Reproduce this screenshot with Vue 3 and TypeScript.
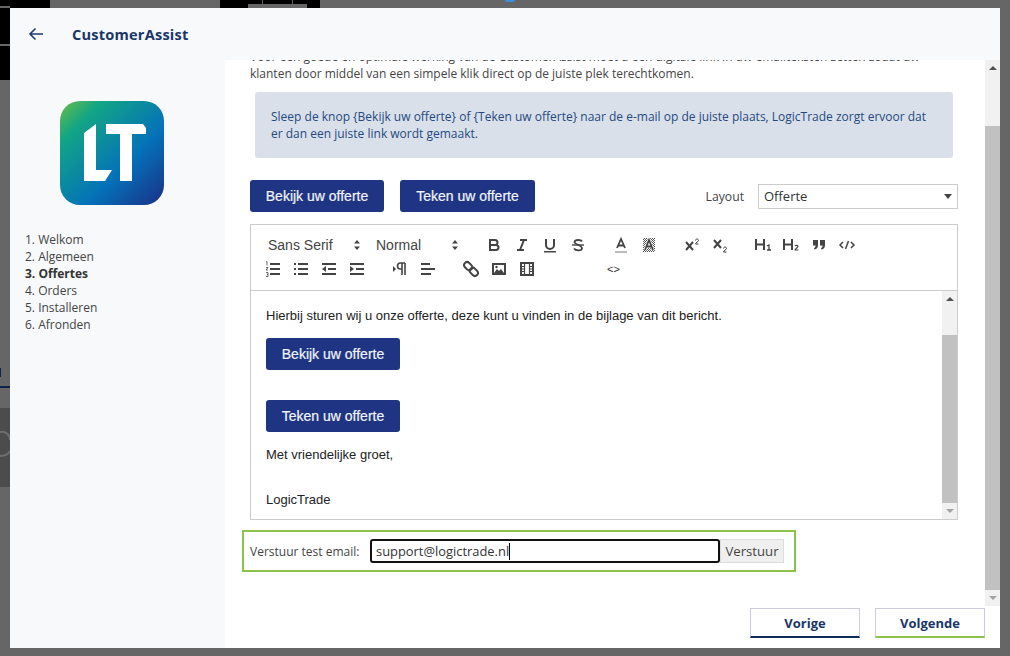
<script setup lang="ts">
const steps = ["1. Welkom", "2. Algemeen", "3. Offertes", "4. Orders", "5. Installeren", "6. Afronden"];
const activeStep = 2;
</script>

<template>
  <div class="page">
    <div class="backdrop-bits">
      <div class="bit bit-corner"></div>
      <div class="bit bit-side"><i></i></div>
      <div class="bit bit-top"><i></i></div>
      <div class="bit bit-tick"></div>
      <div class="bit bit-letter"></div>
      <div class="bit bit-line"></div>
      <div class="bit bit-avatar">
        <svg width="10" height="79" viewBox="0 0 10 79">
          <path d="M0 24c6-1 10 3 10 8M0 48c5 0 8-2 10-5" fill="none" stroke="#6e6e6e" stroke-width="2" />
        </svg>
      </div>
      <div class="bit bit-dot"></div>
    </div>

    <div class="modal">
      <aside class="sidebar">
        <div class="logo">
          <svg width="104" height="104" viewBox="0 0 104 104">
            <defs>
              <linearGradient id="lt" x1="0" y1="0" x2="1" y2="1">
                <stop offset="0" stop-color="#6cbd45" />
                <stop offset="0.2" stop-color="#12a585" />
                <stop offset="0.62" stop-color="#0472b9" />
                <stop offset="1" stop-color="#1b2f87" />
              </linearGradient>
            </defs>
            <rect width="104" height="104" rx="20" fill="url(#lt)" />
            <path d="M24 32L36 23V69H52L45 80H24Z" fill="#fff" />
            <path d="M46 23H83L86 27V33H72V80H60V33H46Z" fill="#fff" />
          </svg>
        </div>
        <ol class="steps">
          <li v-for="(step, i) in steps" :key="step" :class="{ active: i === activeStep }">{{ step }}</li>
        </ol>
      </aside>

      <div class="main">
        <header class="topbar">
          <svg class="back" width="16" height="14" viewBox="0 0 16 14">
            <path d="M15 7H2M7.5 1.500L2 7l5.500 5.500" fill="none" stroke="#1e3a73" stroke-width="1.600" />
          </svg>
          <span class="title">CustomerAssist</span>
        </header>

        <div class="body">
          <div class="content">
            <p class="intro">
              <span class="intro-first">Voor een goede en optimale werking van de CustomerAssist moet u een digitale link in uw emailteksten zetten zodat uw</span>
              klanten door middel van een simpele klik direct op de juiste plek terechtkomen.
            </p>

            <div class="notice">
              Sleep de knop {Bekijk uw offerte} of {Teken uw offerte} naar de e-mail op de juiste plaats, LogicTrade zorgt ervoor dat er dan een juiste link wordt gemaakt.
            </div>

            <div class="actions">
              <a class="offer-btn">Bekijk uw offerte</a>
              <a class="offer-btn">Teken uw offerte</a>
              <label class="layout-label">Layout</label>
              <div class="layout-select">
                <span>Offerte</span>
                <i class="caret"></i>
              </div>
            </div>

            <div class="editor">
              <div class="toolbar">
                <div class="tool-row">
                  <span class="picker picker-font">Sans Serif<svg width="8" height="12" viewBox="0 0 8 12"><path d="M4 1l3 3.500H1zM4 11L1 7.500h6z" fill="#444" /></svg></span>
                  <span class="picker picker-size">Normal<svg width="8" height="12" viewBox="0 0 8 12"><path d="M4 1l3 3.500H1zM4 11L1 7.500h6z" fill="#444" /></svg></span>
                  <svg class="ico" viewBox="0 0 18 18"><path d="M5 4h5a2.500 2.500 0 0 1 0 5H5zM5 9h6a2.500 2.500 0 0 1 0 5H5z" fill="none" stroke="#444" stroke-width="2" /></svg>
                  <svg class="ico" viewBox="0 0 18 18"><path d="M7 4h7M4 14h7M11 4L7 14" fill="none" stroke="#444" stroke-width="2" /></svg>
                  <svg class="ico" viewBox="0 0 18 18"><path d="M5 3v6a4 4 0 0 0 8 0V3" fill="none" stroke="#444" stroke-width="2" /><rect x="3" y="15" width="12" height="1.500" fill="#444" /></svg>
                  <svg class="ico" viewBox="0 0 18 18"><path d="M13 5.500C12 3.500 6 3.300 5.500 6c-.4 2.500 7.500 3 7.500 6.200C13 15 6.500 15 5 12.500" fill="none" stroke="#444" stroke-width="1.800" /><rect x="3" y="8.300" width="12" height="1.400" fill="#444" /></svg>
                  <svg class="ico gap" viewBox="0 0 18 18"><path d="M5 12L9 3l4 9M6.500 9.500h5" fill="none" stroke="#444" stroke-width="1.800" /><rect x="3" y="15" width="12" height="2" fill="#bbb" /></svg>
                  <svg class="ico" viewBox="0 0 18 18"><defs><pattern id="hatch" width="2" height="2" patternUnits="userSpaceOnUse"><rect width="1" height="1" fill="#555" /><rect x="1" y="1" width="1" height="1" fill="#555" /></pattern></defs><rect x="3" y="2" width="12" height="14" fill="url(#hatch)" /><path d="M5 14L9 4l4 10M6.500 10.500h5" fill="none" stroke="#fff" stroke-width="3" /><path d="M5 14L9 4l4 10M6.500 10.500h5" fill="none" stroke="#444" stroke-width="1.800" /></svg>
                  <svg class="ico gap" viewBox="0 0 18 18"><path d="M3 6l7 8M10 6l-7 8" stroke="#444" stroke-width="2" fill="none" /><path d="M12.500 4.500c0-2 3-2 3 0 0 1.200-3 2-3 3.500h3" stroke="#444" stroke-width="1" fill="none" /></svg>
                  <svg class="ico" viewBox="0 0 18 18"><path d="M3 4l7 8M10 4l-7 8" stroke="#444" stroke-width="2" fill="none" /><path d="M12.500 12.500c0-2 3-2 3 0 0 1.200-3 2-3 3.500h3" stroke="#444" stroke-width="1" fill="none" /></svg>
                  <svg class="ico gap" viewBox="0 0 18 18"><path d="M2 3v11M10 3v11M2 8.500h8" stroke="#444" stroke-width="2" fill="none" /><path d="M13 10l2-1v5M13 14h4" stroke="#444" stroke-width="1.300" fill="none" /></svg>
                  <svg class="ico" viewBox="0 0 18 18"><path d="M2 3v11M10 3v11M2 8.500h8" stroke="#444" stroke-width="2" fill="none" /><path d="M13 10c.5-1 3-1 3 .5 0 1-3 2-3 3.500h3.500" stroke="#444" stroke-width="1.200" fill="none" /></svg>
                  <svg class="ico" viewBox="0 0 18 18"><path d="M3 4h5v5c0 2.500-1 4-3.500 4.500L4 12c1-.3 1.500-1 1.500-2.500H3zM10 4h5v5c0 2.500-1 4-3.500 4.500L11 12c1-.3 1.500-1 1.500-2.500H10z" fill="#444" /></svg>
                  <svg class="ico" viewBox="0 0 18 18"><path d="M5 6L2 9l3 3M13 6l3 3-3 3M10.500 5l-3 8" stroke="#444" stroke-width="1.500" fill="none" /></svg>
                </div>
                <div class="tool-row">
                  <svg class="ico" viewBox="0 0 18 18"><path d="M6 4h10M6 9h10M6 14h10" stroke="#444" stroke-width="2" /><path d="M2 2l1-.5v4M2 7.500h2L2 10h2M2 12.500h2v2H3h1v2H2" stroke="#444" stroke-width=".8" fill="none" /></svg>
                  <svg class="ico" viewBox="0 0 18 18"><path d="M6 4h10M6 9h10M6 14h10" stroke="#444" stroke-width="2" /><path d="M2 4h2M2 9h2M2 14h2" stroke="#444" stroke-width="2" /></svg>
                  <svg class="ico" viewBox="0 0 18 18"><path d="M2 4h14M8 9h8M2 14h14" stroke="#444" stroke-width="2" /><path d="M6 6v6L2 9z" fill="#444" /></svg>
                  <svg class="ico" viewBox="0 0 18 18"><path d="M2 4h14M8 9h8M2 14h14" stroke="#444" stroke-width="2" /><path d="M2 6v6l4-3z" fill="#444" /></svg>
                  <svg class="ico gap" viewBox="0 0 18 18"><path d="M2 6v6l3-3z" fill="#444" /><path d="M11 3v12M14 3v12M14 3H9.500a3 3 0 0 0 0 6H11" stroke="#444" stroke-width="1.600" fill="none" /></svg>
                  <svg class="ico" viewBox="0 0 18 18"><path d="M2 4h9M2 9h14M2 14h10" stroke="#444" stroke-width="2" /></svg>
                  <svg class="ico gap" viewBox="0 0 18 18"><g transform="rotate(-45 9 9)" fill="none" stroke="#444" stroke-width="2"><rect x="6" y="0.500" width="6" height="9" rx="3" /><rect x="6" y="8.500" width="6" height="9" rx="3" /></g></svg>
                  <svg class="ico" viewBox="0 0 18 18"><rect x="3" y="4" width="12" height="10" fill="none" stroke="#444" stroke-width="2" /><path d="M4 13l3-4 2 2 2-2 3 4z" fill="#444" /><circle cx="6.500" cy="7" r="1.200" fill="#444" /></svg>
                  <svg class="ico" viewBox="0 0 18 18"><rect x="3" y="3" width="12" height="12" fill="none" stroke="#444" stroke-width="2" /><path d="M6.500 3v12M11.500 3v12M3 6.500h3.500M3 9h3.500M3 11.500h3.500M11.500 6.500H15M11.500 9H15M11.500 11.500H15" stroke="#444" stroke-width="1.200" /></svg>
                  <span class="source">&lt;&gt;</span>
                </div>
              </div>
              <div class="editor-body">
                <div class="editor-text">
                  <p>Hierbij sturen wij u onze offerte, deze kunt u vinden in de bijlage van dit bericht.</p>
                  <a class="offer-btn">Bekijk uw offerte</a>
                  <a class="offer-btn second">Teken uw offerte</a>
                  <p class="greet">Met vriendelijke groet,</p>
                  <p class="sign">LogicTrade</p>
                </div>
                <div class="scroll scroll-inner">
                  <i class="arrow up"></i>
                  <div class="track"><div class="thumb"></div></div>
                  <i class="arrow down"></i>
                </div>
              </div>
            </div>

            <div class="test-mail">
              <label>Verstuur test email:</label>
              <div class="test-input">support@logictrade.nl<i class="cursor"></i></div>
              <button class="send">Verstuur</button>
            </div>
          </div>

          <div class="scroll scroll-outer">
            <i class="arrow up"></i>
            <div class="track"><div class="thumb"></div></div>
            <i class="arrow down"></i>
          </div>
        </div>

        <footer class="footer">
          <button class="nav prev">Vorige</button>
          <button class="nav next">Volgende</button>
        </footer>
      </div>
    </div>
  </div>
</template>

<style>
html, body {
  margin: 0;
  background: #666;
  overflow: hidden;
}
</style>

<style scoped>
.page {
  position: relative;
  width: 1010px;
  height: 656px;
  padding: 8px 10px;
  box-sizing: border-box;
  background: #666;
  font-family: "Open Sans", sans-serif;
  overflow: hidden;
}

.bit {
  position: absolute;
}

.bit-corner {
  left: 0;
  top: 0;
  width: 50px;
  height: 8px;
  background: #000;
}

.bit-side {
  left: 0;
  top: 8px;
  width: 10px;
  height: 72px;
  background: #000;
}

.bit-side i {
  display: block;
  height: 40px;
  margin-top: -2px;
  box-sizing: border-box;
  border-top: 2px solid #666;
  border-bottom: 2px solid #666;
  position: relative;
}

.bit-top {
  left: 220px;
  top: 0;
  width: 100px;
  height: 8px;
  background: #000;
}

.bit-top i {
  position: absolute;
  left: 28px;
  top: 4px;
  width: 59px;
  height: 4px;
  background: #666;
}

.bit-tick {
  left: 262px;
  top: 0;
  width: 31px;
  height: 4px;
  box-sizing: border-box;
  border-left: 1px solid #666;
  border-right: 1px solid #666;
}

.bit-letter {
  left: 0;
  top: 368px;
  width: 1px;
  height: 9px;
  background: #0d2444;
}

.bit-line {
  left: 0;
  top: 386px;
  width: 10px;
  height: 2px;
  background: #0d2444;
}

.bit-avatar {
  left: 0;
  top: 408px;
  width: 10px;
  height: 79px;
  background: #4c4c4c;
}

.bit-dot {
  left: 505px;
  top: 0;
  width: 10px;
  height: 2px;
  background: #3d8fd6;
  border-radius: 0 0 5px 5px;
}

.modal {
  position: relative;
  display: flex;
  height: 640px;
  background: #f7f9fb;
}

.sidebar {
  width: 215px;
  flex-shrink: 0;
  padding: 93px 0 0 15px;
  box-sizing: border-box;
}

.logo {
  height: 104px;
  padding-left: 35px;
}

.steps {
  list-style: none;
  margin: 26px 0 0;
  padding: 0;
  font-size: 12px;
  line-height: 17px;
  color: #444;
}

.steps .active {
  font-weight: 700;
  color: #333;
}

.main {
  flex: 1;
  min-width: 0;
  display: flex;
  flex-direction: column;
}

.topbar {
  height: 52px;
  margin-left: -215px;
  padding-left: 18px;
  display: flex;
  align-items: center;
}

.back {
  margin-right: 28px;
}

.title {
  font-size: 14.6px;
  font-weight: 700;
  color: #1a3668;
  letter-spacing: 0.2px;
}

.body {
  flex: 1;
  min-height: 0;
  display: flex;
  background: #fff;
}

.content {
  flex: 1;
  min-width: 0;
  padding: 0 0 0 25px;
  position: relative;
  overflow: hidden;
}

.intro {
  margin: 0;
  font-size: 12px;
  line-height: 17px;
  color: #444;
}

.intro-first {
  display: block;
  white-space: nowrap;
  margin-top: -12px;
}

.notice {
  width: 698px;
  box-sizing: border-box;
  margin: 10px 0 0 5px;
  padding: 16px 24px 0 16px;
  height: 66px;
  background: #dae0ea;
  border-radius: 3px;
  font-size: 12px;
  line-height: 17px;
  color: #1f4a80;
}

.actions {
  display: flex;
  align-items: center;
  margin-top: 22px;
  width: 708px;
}

.offer-btn {
  display: block;
  width: 134px;
  height: 32px;
  text-align: center;
  background: #1f3584;
  color: #f2f4fa;
  border-radius: 3px;
  font: 14px/32px "Liberation Sans", sans-serif;
  -webkit-text-stroke: 0.2px #f2f4fa;
}

.actions .offer-btn + .offer-btn {
  margin-left: 16px;
  width: 135px;
}

.layout-label {
  margin-left: auto;
  font-size: 12.2px;
  color: #444;
}

.layout-select {
  position: relative;
  width: 200px;
  height: 25px;
  margin-left: 14px;
  border: 1px solid #ccc;
  box-sizing: border-box;
  padding-left: 5px;
  font-size: 13px;
  line-height: 23px;
  color: #333;
}

.caret {
  position: absolute;
  right: 5px;
  top: 9px;
  border: 4px solid transparent;
  border-top: 5px solid #444;
  border-bottom: 0;
}

.editor {
  width: 708px;
  height: 296px;
  margin-top: 12px;
  border: 1px solid #ccc;
  box-sizing: border-box;
  display: flex;
  flex-direction: column;
}

.toolbar {
  height: 66px;
  flex-shrink: 0;
  border-bottom: 1px solid #ccc;
  box-sizing: border-box;
  padding: 8px 0 0 13px;
  color: #444;
}

.tool-row {
  height: 24px;
  display: flex;
  align-items: center;
}

.picker {
  display: flex;
  align-items: center;
  justify-content: space-between;
  font: 14px "Liberation Sans", sans-serif;
  color: #444;
}

.picker-font {
  width: 93px;
  margin-left: 4px;
}

.picker-size {
  width: 83px;
  margin-left: 15px;
  margin-right: 26px;
}

.ico {
  width: 18px;
  height: 18px;
  margin-right: 10px;
  flex-shrink: 0;
}

.gap {
  margin-left: 15px;
}

.source {
  margin-left: 61px;
  font: 11px "Liberation Sans", sans-serif;
  color: #333;
}

.editor-body {
  flex: 1;
  min-height: 0;
  display: flex;
}

.editor-text {
  flex: 1;
  padding: 17px 0 0 15px;
  font: 13px/15px "Liberation Sans", sans-serif;
  color: #222;
}

.editor-text p {
  margin: 0;
}

.editor-text .offer-btn {
  margin-top: 15px;
}

.editor-text .second {
  margin-top: 30px;
}

.editor-text .greet {
  margin-top: 15px;
}

.editor-text .sign {
  margin-top: 30px;
}

.scroll {
  flex-shrink: 0;
  display: flex;
  flex-direction: column;
  background: #f1f1f1;
}

.scroll-inner {
  width: 15px;
}

.scroll-outer {
  width: 15px;
  height: 546px;
}

.track {
  flex: 1;
  min-height: 0;
  position: relative;
}

.thumb {
  position: absolute;
  left: 0;
  right: 0;
  background: #c1c1c1;
}

.scroll-inner .thumb {
  top: 28px;
  bottom: 0;
}

.scroll-outer .thumb {
  top: 50px;
  bottom: 0;
}

.arrow {
  height: 16px;
  flex-shrink: 0;
  position: relative;
  display: block;
}

.arrow::after {
  content: "";
  position: absolute;
  left: 4px;
  top: 6px;
  border: 4px solid transparent;
  border-top: 0;
  border-bottom: 4px solid #505050;
}

.arrow.down::after {
  border-bottom: 0;
  border-top: 4px solid #a3a3a3;
}

.test-mail {
  position: relative;
  width: 554px;
  height: 42px;
  margin: 10px 0 0 -8px;
  border: 2px solid #8bc34a;
  box-sizing: border-box;
  display: flex;
  align-items: center;
  padding-left: 6px;
  font-size: 12px;
  color: #444;
}

.test-mail label {
  width: 120px;
  flex-shrink: 0;
}

.test-input {
  width: 350px;
  height: 24px;
  box-sizing: border-box;
  border: 2px solid #111;
  border-radius: 3px;
  padding-left: 4px;
  font-size: 12.9px;
  line-height: 20px;
  color: #333;
  display: flex;
  align-items: center;
}

.cursor {
  width: 1px;
  height: 17px;
  background: #000;
}

.send {
  width: 64px;
  height: 24px;
  padding: 0;
  border: 1px solid #ddd;
  background: #efefef;
  font: 13.2px "Open Sans", sans-serif;
  color: #444;
}

.footer {
  height: 42px;
  background: #fff;
  display: flex;
  justify-content: flex-end;
  gap: 15px;
  padding: 2px 15px 0 0;
  box-sizing: border-box;
}

.nav {
  width: 110px;
  height: 30px;
  padding: 1px 0 0;
  background: #fff;
  border: 1px solid #ccd;
  border-bottom: 2px solid #0f2d5c;
  font: 700 13px "Open Sans", sans-serif;
  color: #1a3668;
}

.next {
  border-bottom-color: #8bc34a;
}
</style>
